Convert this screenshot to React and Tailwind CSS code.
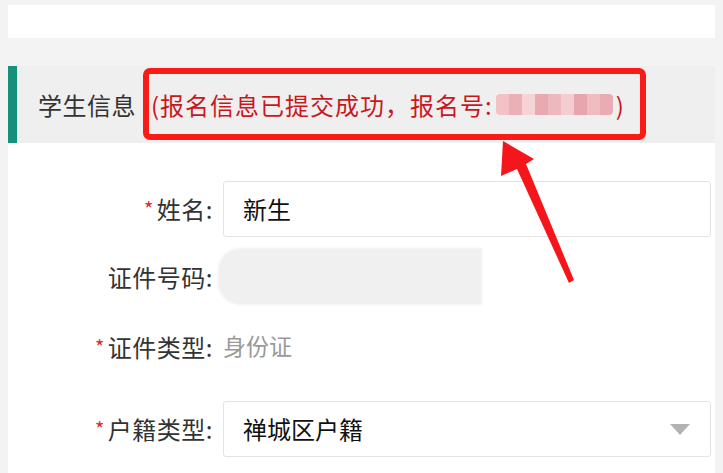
const FONT = { fontFamily: '"Noto Sans CJK SC", "Noto Sans", sans-serif' };

function Req() {
  return <span className="mr-[3px] relative top-[-2px] text-[20px] text-[#e0262b]">*</span>;
}

function Label({ required, children }) {
  return (
    <div className="w-[205px] shrink-0 text-right text-[24px] tracking-[0.5px] text-[#333]">
      {required && <Req />}
      {children}:
    </div>
  );
}

// pixelated (mosaic) area that hides the number
function Mosaic() {
  const cells = ['#f3c2c6', '#eab0b6', '#f6d3d6', '#e9a9b0', '#eeb9be', '#f4cdd1', '#e7a5ad', '#efbcc1', '#e9acb3'];
  return (
    <span className="mx-[3px] inline-flex h-[21px] w-[117px] overflow-hidden rounded-[4px] blur-[0.6px] align-middle">
      {cells.map((c, i) => (
        <span key={i} className="h-full flex-1" style={{ background: c }} />
      ))}
    </span>
  );
}

export default function App() {
  return (
    <div className="relative h-[473px] w-[723px] overflow-hidden bg-[#f3f3f3] px-[8px] pt-[5px]" style={FONT}>
      <div className="h-[33px] bg-white" />

      <div className="mt-[28px]">
        <div className="relative flex h-[77px] items-center border-l-[9px] border-[#14907b] bg-[#efefef] pl-[21px] text-[24px]">
          <span className="tracking-[0.5px] text-[#333]">学生信息</span>
          <span className="ml-[15px] flex items-center tracking-[1px] text-[#c9171e]">
            (报名信息已提交成功，报名号:
            <Mosaic />)
          </span>
          <div className="absolute left-[126px] top-[2px] h-[72px] w-[503px] rounded-[7px] border-[6px] border-[#fa1a16]" />
        </div>

        <div className="h-[400px] bg-white pt-[38px]">
          <div className="flex items-center">
            <Label required>姓名</Label>
            <div className="ml-[10px] mr-[4px] flex h-[56px] flex-1 items-center rounded-[3px] border border-[#e3e3e3] pl-[19px] text-[24px] text-[#111]">
              新生
            </div>
          </div>

          <div className="mt-[11px] flex items-center">
            <Label>证件号码</Label>
            <div className="ml-[5px] h-[57px] w-[264px] rounded-l-[22px] bg-[#f0f0f0] blur-[1px]" />
          </div>

          <div className="mt-[14px] flex h-[56px] items-center">
            <Label required>证件类型</Label>
            <div className="ml-[10px] -mt-[4px] text-[23px] text-[#999]">身份证</div>
          </div>

          <div className="mt-[26px] flex items-center">
            <Label required>户籍类型</Label>
            <div className="ml-[10px] mr-[4px] flex h-[56px] flex-1 items-center justify-between rounded-[3px] border border-[#e3e3e3] pl-[19px] pr-[20px] text-[24px] text-[#111]">
              <span>禅城区户籍</span>
              <svg width="20" height="11" viewBox="0 0 20 11">
                <polygon points="0,0 20,0 10,11" fill="#b3b3b3" />
              </svg>
            </div>
          </div>
        </div>
      </div>

      <svg className="pointer-events-none absolute left-0 top-0" width="723" height="473" viewBox="0 0 723 473">
        <polygon
          points="503,141 534,159 526,164 574,280 569,283 517,169 501,176"
          fill="#f5161b"
        />
      </svg>
    </div>
  );
}
